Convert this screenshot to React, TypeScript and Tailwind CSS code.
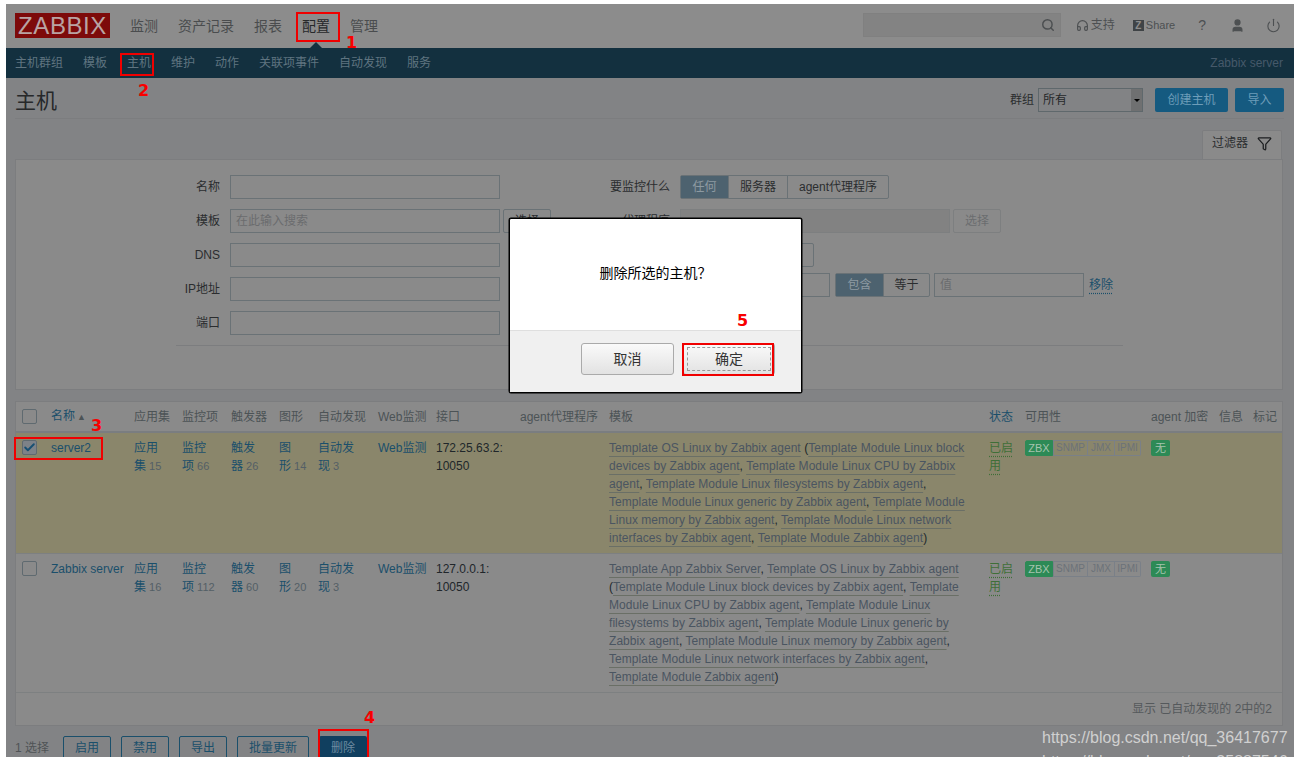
import React from "react";
import { Check, Filter, Headphones, Power, Search, User } from "lucide-react";

const nav = ["监测", "资产记录", "报表", "配置", "管理"];
const subnav = ["主机群组", "模板", "主机", "维护", "动作", "关联项事件", "自动发现", "服务"];

const filterLeft = [
  { label: "名称", placeholder: "" },
  { label: "模板", placeholder: "在此输入搜索" },
  { label: "DNS", placeholder: "" },
  { label: "IP地址", placeholder: "" },
  { label: "端口", placeholder: "" },
];

const headers = [
  { text: "名称", blue: true, sort: true },
  { text: "应用集" },
  { text: "监控项" },
  { text: "触发器" },
  { text: "图形" },
  { text: "自动发现" },
  { text: "Web监测" },
  { text: "接口" },
  { text: "agent代理程序" },
  { text: "模板" },
  { text: "状态", blue: true },
  { text: "可用性" },
  { text: "agent 加密" },
  { text: "信息" },
  { text: "标记" },
];

const T = ({ children }: { children: React.ReactNode }) => (
  <span className="text-[#4a5561] underline decoration-[#6a6f66] underline-offset-[4px]">{children}</span>
);

const Num = ({ children }: { children: React.ReactNode }) => (
  <span className="text-[#545f66] text-[11px]"> {children}</span>
);

const Mark = ({ n, className }: { n: string; className: string }) => (
  <span className={"absolute text-[#f80000] text-[16px] leading-[16px] font-bold font-['DejaVu_Sans',sans-serif] " + className}>{n}</span>
);

const Box = ({ className }: { className: string }) => (
  <div className={"absolute border-2 border-[#f00000] " + className} />
);

const Availability = () => (
  <div className="flex items-start gap-[10px] mt-[1px]">
    <div className="flex h-[16px] text-[10px] leading-[14px] text-center">
      <span className="w-[28px] bg-[#2d8a56] border border-[#2d8a56] text-[#a5c4ae] text-[11px] rounded-l-[2px]">ZBX</span>
      <span className="w-[35px] border border-[#7a8088] text-[#6c7279]">SNMP</span>
      <span className="w-[27px] border-y border-r border-[#7a8088] text-[#6c7279]">JMX</span>
      <span className="w-[26px] border-y border-r border-[#7a8088] text-[#6c7279] rounded-r-[2px]">IPMI</span>
    </div>
    <span className="bg-[#2d8a56] text-[#a5c4ae] text-[11px] leading-[16px] h-[16px] w-[19px] text-center rounded-[2px]">无</span>
  </div>
);

const Row = ({
  name,
  checked,
  counts,
  ip,
  templates,
}: {
  name: string;
  checked?: boolean;
  counts: string[];
  ip: string;
  templates: React.ReactNode;
}) => {
  const link = "text-[#1a4f6b]";
  return (
    <tr className={(checked ? "bg-[#8a866b]" : "bg-[#8a8a8a]") + " border-b border-[#7d8081] align-top"}>
      <td className="pl-[6px] pt-[7px]">
        <div className={"w-[15px] h-[15px] border border-[#5f6a70] rounded-[2px] flex items-center justify-center " + (checked ? "bg-[#7d8288]" : "")}>
          {checked && <Check className="w-[13px] h-[13px] text-[#174f72]" strokeWidth={3.5} />}
        </div>
      </td>
      <td className={"pt-[6px] pb-[6px] whitespace-nowrap " + link}>{name}</td>
      <td className={"pt-[6px] " + link}>应用<br />集<Num>{counts[0]}</Num></td>
      <td className={"pt-[6px] " + link}>监控<br />项<Num>{counts[1]}</Num></td>
      <td className={"pt-[6px] " + link}>触发<br />器<Num>{counts[2]}</Num></td>
      <td className={"pt-[6px] " + link}>图<br />形<Num>{counts[3]}</Num></td>
      <td className={"pt-[6px] " + link}>自动发<br />现<Num>{counts[4]}</Num></td>
      <td className={"pt-[6px] whitespace-nowrap " + link}>Web监测</td>
      <td className="pt-[6px] text-[#20262a]">{ip}:<br />10050</td>
      <td />
      <td className="pt-[6px] pb-[6px] pr-[14px] text-[#20262a] tracking-[0.05px]">{templates}</td>
      <td className="pt-[6px] text-[#3f6f38]">
        <span className="underline decoration-dotted underline-offset-[4px]">已启<br />用</span>
      </td>
      <td className="pt-[6px]" colSpan={4}><Availability /></td>
    </tr>
  );
};

const Seg = ({ items, widths }: { items: string[]; widths: string[] }) => (
  <div className="flex h-[24px] border border-[#6a7276] rounded-[2px] text-[#2a2d2f]">
    {items.map((it, i) => (
      <span
        key={it}
        className={
          widths[i] + " text-center leading-[22px] " +
          (i === 0 ? "bg-[#4d626f] text-[#8d9aa2]" : "border-l border-[#6a7276]")
        }
      >
        {it}
      </span>
    ))}
  </div>
);

export default function App() {
  return (
    <div className="relative w-[1296px] h-[757px] overflow-hidden bg-white text-[12px] leading-[18px] font-['Liberation_Sans','Noto_Sans_CJK_SC',sans-serif]">
      <div className="ml-[6px] mt-[4px] w-[1288px] bg-[#828385] flex flex-col">
        {/* top bar */}
        <div className="relative h-[44px] bg-[#8c8c8c] flex items-center pl-[9px] pr-[13px]">
          <div className="w-[95px] h-[25px] mt-[-2px] bg-[#7d0a0a] text-[#b9a3a3] text-[24px] leading-[25px] text-center tracking-[0.6px]">ZABBIX</div>
          <div className="flex gap-[20px] ml-[20px] text-[14px] text-[#4a4c4e]">
            {nav.map((n) => (
              <span key={n} className={n === "配置" ? "text-[#26282a]" : ""}>{n}</span>
            ))}
          </div>
          <div className="ml-auto flex items-center text-[#4d5052] mt-[-2px]">
            <div className="w-[198px] h-[24px] bg-[#838383] border border-[#808080] flex items-center justify-end pr-[5px]">
              <Search className="w-[14px] h-[14px] text-[#4c4f51]" strokeWidth={2.5} />
            </div>
            <Headphones className="w-[13px] h-[13px] ml-[15px]" strokeWidth={2.2} />
            <span className="ml-[2px] text-[12px]">支持</span>
            <span className="ml-[18px] w-[11px] h-[11px] bg-[#3f4346] text-[#8c8c8c] text-[10px] leading-[11px] font-bold text-center">Z</span>
            <span className="ml-[2px] text-[11px]">Share</span>
            <span className="ml-[23px] text-[14px]">?</span>
            <User className="w-[15px] h-[15px] ml-[24px] fill-[#4d5052]" strokeWidth={2} />
            <Power className="w-[15px] h-[15px] ml-[21px]" strokeWidth={1.8} />
          </div>
          <div className="absolute left-[304px] bottom-0 w-0 h-0 border-x-[6px] border-x-transparent border-b-[6px] border-b-[#13303f]" />
        </div>

        {/* sub nav */}
        <div className="h-[30px] bg-[#13303f] flex items-center pl-[9px] pr-[11px] text-[#5f7480]">
          <div className="flex gap-[20px]">
            {subnav.map((n) => (
              <span key={n}>{n}</span>
            ))}
          </div>
          <span className="ml-auto text-[#46596a]">Zabbix server</span>
        </div>

        {/* title row */}
        <div className="ml-[9px] mr-[10px] h-[41px] border-b border-[#7c7d7f] flex items-start pt-[10px]">
          <h1 className="text-[21px] leading-[26px] text-[#26282a]">主机</h1>
          <div className="ml-auto flex items-center text-[#2b2d2f]">
            <span>群组</span>
            <div className="ml-[4px] w-[105px] h-[24px] border border-[#5f686c] flex items-center pl-[4px] text-[#26282a]">
              所有
              <span className="ml-auto w-[11px] h-[22px] bg-[#6f7071] flex items-center justify-center">
                <span className="w-0 h-0 border-x-[3px] border-x-transparent border-t-[3px] border-t-black" />
              </span>
            </div>
            <span className="ml-[12px] w-[73px] h-[24px] bg-[#155a80] text-[#6e9db9] text-center leading-[24px] rounded-[2px]">创建主机</span>
            <span className="ml-[7px] w-[49px] h-[24px] bg-[#155a80] text-[#6e9db9] text-center leading-[24px] rounded-[2px]">导入</span>
          </div>
        </div>

        {/* filter tab */}
        <div className="flex justify-end mr-[12px] mt-[11px]">
          <div className="w-[80px] h-[29px] bg-[#8a8a8a] border-x border-t border-[#7c7d7f] rounded-t-[2px] flex items-center pl-[9px] pb-[4px] text-[#2b2d2f]">
            过滤器
            <Filter className="w-[15px] h-[15px] ml-[9px] text-[#1c1e20]" strokeWidth={2} />
          </div>
        </div>

        {/* filter panel */}
        <div className="ml-[9px] mr-[11px] h-[231px] bg-[#8a8a8a] border border-[#7c7d7f] pt-[15px]">
          <div className="flex">
            <div className="flex flex-col gap-[10px] w-[535px]">
              {filterLeft.map((f) => (
                <div key={f.label} className="flex items-center">
                  <span className="w-[204px] text-right text-[#2b2d2f]">{f.label}</span>
                  <div className="ml-[10px] w-[270px] h-[24px] border border-[#6a7276] pl-[5px] leading-[22px] text-[#6a6c6e]">{f.placeholder}</div>
                  {f.label === "模板" && (
                    <span className="ml-[3px] w-[48px] h-[24px] border border-[#6a7276] rounded-[2px] text-center leading-[22px] text-[#2b2d2f]">选择</span>
                  )}
                </div>
              ))}
            </div>
            <div className="flex flex-col gap-[10px] text-[#2b2d2f]">
              <div className="flex items-center">
                <span className="w-[119px] text-right">要监控什么</span>
                <div className="ml-[10px]">
                  <Seg items={["任何", "服务器", "agent代理程序"]} widths={["w-[47px]", "w-[59px]", "w-[101px]"]} />
                </div>
              </div>
              <div className="flex items-center">
                <span className="w-[119px] text-right">代理程序</span>
                <div className="ml-[10px] w-[270px] h-[24px] bg-[#828282] border border-[#7d7f80]" />
                <span className="ml-[3px] w-[48px] h-[24px] border border-[#7d7f80] rounded-[2px] text-center leading-[22px] text-[#6b6d6f]">选择</span>
              </div>
              <div className="flex items-center">
                <div className="ml-[129px] w-[134px] h-[24px] border border-[#6a7276] rounded-[2px]" />
              </div>
              <div className="flex items-center mt-[-4px]">
                <div className="ml-[129px] w-[150px] h-[24px] border border-[#6a7276]" />
                <div className="ml-[5px]">
                  <Seg items={["包含", "等于"]} widths={["w-[47px]", "w-[46px]"]} />
                </div>
                <div className="ml-[4px] w-[150px] h-[24px] border border-[#6a7276] pl-[5px] leading-[22px] text-[#6a6c6e]">值</div>
                <span className="ml-[5px] text-[#1a4f6b] underline decoration-dotted underline-offset-[4px]">移除</span>
              </div>
            </div>
          </div>
          <div className="mt-[10px] ml-[160px] w-[947px] border-t border-[#7c7d7f]" />
        </div>

        {/* hosts table */}
        <div className="ml-[9px] mr-[11px] mt-[11px] border border-[#7c7d7f] bg-[#8a8a8a]">
          <table className="w-full table-fixed border-collapse">
            <colgroup>
              <col className="w-[35px]" />
              <col className="w-[83px]" />
              <col className="w-[48px]" />
              <col className="w-[49px]" />
              <col className="w-[48px]" />
              <col className="w-[39px]" />
              <col className="w-[60px]" />
              <col className="w-[58px]" />
              <col className="w-[84px]" />
              <col className="w-[89px]" />
              <col className="w-[380px]" />
              <col className="w-[36px]" />
              <col className="w-[126px]" />
              <col className="w-[68px]" />
              <col className="w-[34px]" />
              <col />
            </colgroup>
            <thead>
              <tr className="h-[30px] border-b-2 border-[#7a7d80] text-left">
                <th className="pl-[6px] font-normal">
                  <div className="w-[15px] h-[15px] border border-[#5f6a70] rounded-[2px]" />
                </th>
                {headers.map((h) => (
                  <th key={h.text} className={"font-normal whitespace-nowrap " + (h.blue ? "text-[#1a4f6b]" : "text-[#4c5356]")}>
                    {h.text}
                    {h.sort && <span className="ml-[2px] text-[9px] text-[#4c5356]">▲</span>}
                  </th>
                ))}
              </tr>
            </thead>
            <tbody>
              <Row
                name="server2"
                checked
                counts={["15", "66", "26", "14", "3"]}
                ip="172.25.63.2"
                templates={
                  <>
                    <T>Template OS Linux by Zabbix agent</T> (<T>Template Module Linux block devices by Zabbix agent</T>, <T>Template Module Linux CPU by Zabbix agent</T>, <T>Template Module Linux filesystems by Zabbix agent</T>, <T>Template Module Linux generic by Zabbix agent</T>, <T>Template Module Linux memory by Zabbix agent</T>, <T>Template Module Linux network interfaces by Zabbix agent</T>, <T>Template Module Zabbix agent</T>)
                  </>
                }
              />
              <Row
                name="Zabbix server"
                counts={["16", "112", "60", "20", "3"]}
                ip="127.0.0.1"
                templates={
                  <>
                    <T>Template App Zabbix Server</T>, <T>Template OS Linux by Zabbix agent</T> (<T>Template Module Linux block devices by Zabbix agent</T>, <T>Template Module Linux CPU by Zabbix agent</T>, <T>Template Module Linux filesystems by Zabbix agent</T>, <T>Template Module Linux generic by Zabbix agent</T>, <T>Template Module Linux memory by Zabbix agent</T>, <T>Template Module Linux network interfaces by Zabbix agent</T>, <T>Template Module Zabbix agent</T>)
                  </>
                }
              />
            </tbody>
          </table>
          <div className="h-[32px] flex items-center justify-end pr-[10px] text-[#55595c]">显示 已自动发现的 2中的2</div>
        </div>

        {/* action bar */}
        <div className="flex items-center pl-[9px] mt-[10px] text-[#4f5356]">
          <span className="w-[48px]">1 选择</span>
          {["启用", "禁用", "导出", "批量更新"].map((b) => (
            <span
              key={b}
              className={(b === "批量更新" ? "w-[72px]" : "w-[48px]") + " h-[24px] mr-[10px] border border-[#1a4f6b] rounded-[2px] text-center leading-[22px] text-[#1a4f6b]"}
            >
              {b}
            </span>
          ))}
          <span className="w-[48px] h-[24px] bg-[#103f5f] rounded-[2px] text-center leading-[24px] text-[#6d8ba0]">删除</span>
        </div>
      </div>

      {/* confirm dialog */}
      <div className="absolute left-[509px] top-[218px] w-[293px] h-[175px] bg-white border border-black rounded-[2px] flex flex-col shadow-[0_0_0_0.5px_#000]">
        <div className="flex-1 flex items-center justify-center pb-[3px] text-[14px] text-black">删除所选的主机？</div>
        <div className="h-[62px] bg-[#f0f0f0] border-t border-[#dfdfdf] flex items-start justify-end gap-[9px] pt-[12px] pr-[26px] text-[14px] leading-[30px] text-[#333]">
          <span className="w-[93px] h-[32px] border border-[#aaa] rounded-[3px] text-center bg-gradient-to-b from-[#fafafa] to-[#e2e2e2]">取消</span>
          <span className="w-[92px] h-[32px] border border-[#aaa] rounded-[3px] bg-gradient-to-b from-[#fafafa] to-[#e2e2e2] p-[3px]">
            <span className="block h-full border border-dashed border-[#999] text-center leading-[22px]">确定</span>
          </span>
        </div>
      </div>

      {/* red annotations */}
      <Box className="left-[296px] top-[12px] w-[44px] h-[30px]" />
      <Box className="left-[120px] top-[53px] w-[34px] h-[23px]" />
      <Box className="left-[14px] top-[437px] w-[89px] h-[23px]" />
      <Box className="left-[318px] top-[729px] w-[51px] h-[30px]" />
      <Box className="left-[682px] top-[343px] w-[92px] h-[33px]" />
      <Mark n="1" className="left-[346px] top-[35px]" />
      <Mark n="2" className="left-[138px] top-[83px]" />
      <Mark n="3" className="left-[91px] top-[418px]" />
      <Mark n="4" className="left-[364px] top-[710px]" />
      <Mark n="5" className="left-[737px] top-[313px]" />

      {/* csdn watermark */}
      <div className="absolute left-[1042px] top-[728px] text-[16px] leading-[20px] text-[#d0d0d0] whitespace-nowrap font-['Liberation_Sans',sans-serif]">
        https://blog.csdn.net/qq_36417677
      </div>
      <div className="absolute left-[1042px] top-[752px] text-[16px] leading-[20px] text-[#d0d0d0] whitespace-nowrap font-['Liberation_Sans',sans-serif]">
        https://blog.csdn.net/qq_35887546
      </div>
    </div>
  );
}
